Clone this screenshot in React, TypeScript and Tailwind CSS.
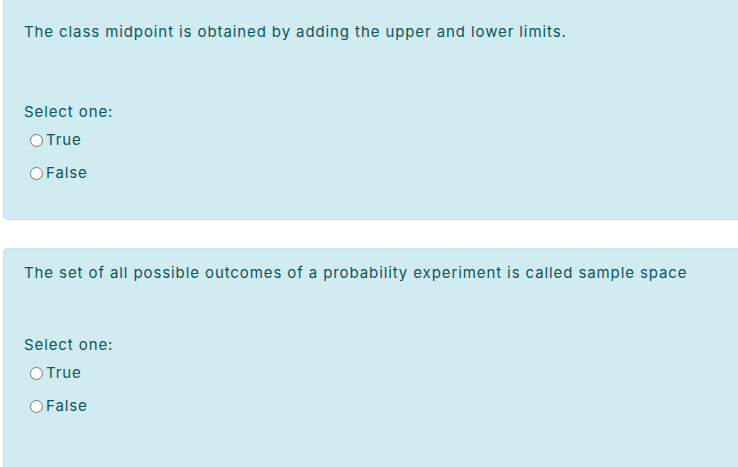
import React from "react";

interface Question {
    text: string;
    gapTop: string;
    topClass: string;
}

const questions: Question[] = [
    {
        text: "The class midpoint is obtained by adding the upper and lower limits.",
        gapTop: "mt-[58px]",
        topClass: "-mt-[20px] pt-[40px] pb-[35px]",
    },
    {
        text: "The set of all possible outcomes of a probability experiment is called sample space",
        gapTop: "mt-[50px]",
        topClass: "pt-[13px] pb-[60px]",
    },
];

const Radio: React.FC<{ label: string }> = ({ label }) => (
    <label className="flex items-center ml-[6px] h-[22px]">
        <span className="w-[13px] h-[13px] rounded-full border border-[#767676] bg-white mr-[3px] shrink-0" />
        <span>{label}</span>
    </label>
);

const App: React.FC = () => {
    return (
        <div
            className="w-[738px] h-[467px] overflow-hidden bg-white text-[#0c5460] text-[15px] leading-[22px] tracking-[0.9px]"
            style={{ fontFamily: 'Inter, "Liberation Sans", sans-serif' }}
        >
            <div className="flex flex-col gap-[28px]">
                {questions.map((q, i) => (
                    <div
                        key={i}
                        className={`ml-[3px] w-[760px] shrink-0 rounded-[4px] border border-[#bee5eb] bg-[#d1ecf1] pl-[20px] ${q.topClass}`}
                    >
                        <p>{q.text}</p>
                        <p className={q.gapTop}>Select one:</p>
                        <div className="mt-[6px]">
                            <Radio label="True" />
                        </div>
                        <div className="mt-[11px]">
                            <Radio label="False" />
                        </div>
                    </div>
                ))}
            </div>
        </div>
    );
};

export default App;
